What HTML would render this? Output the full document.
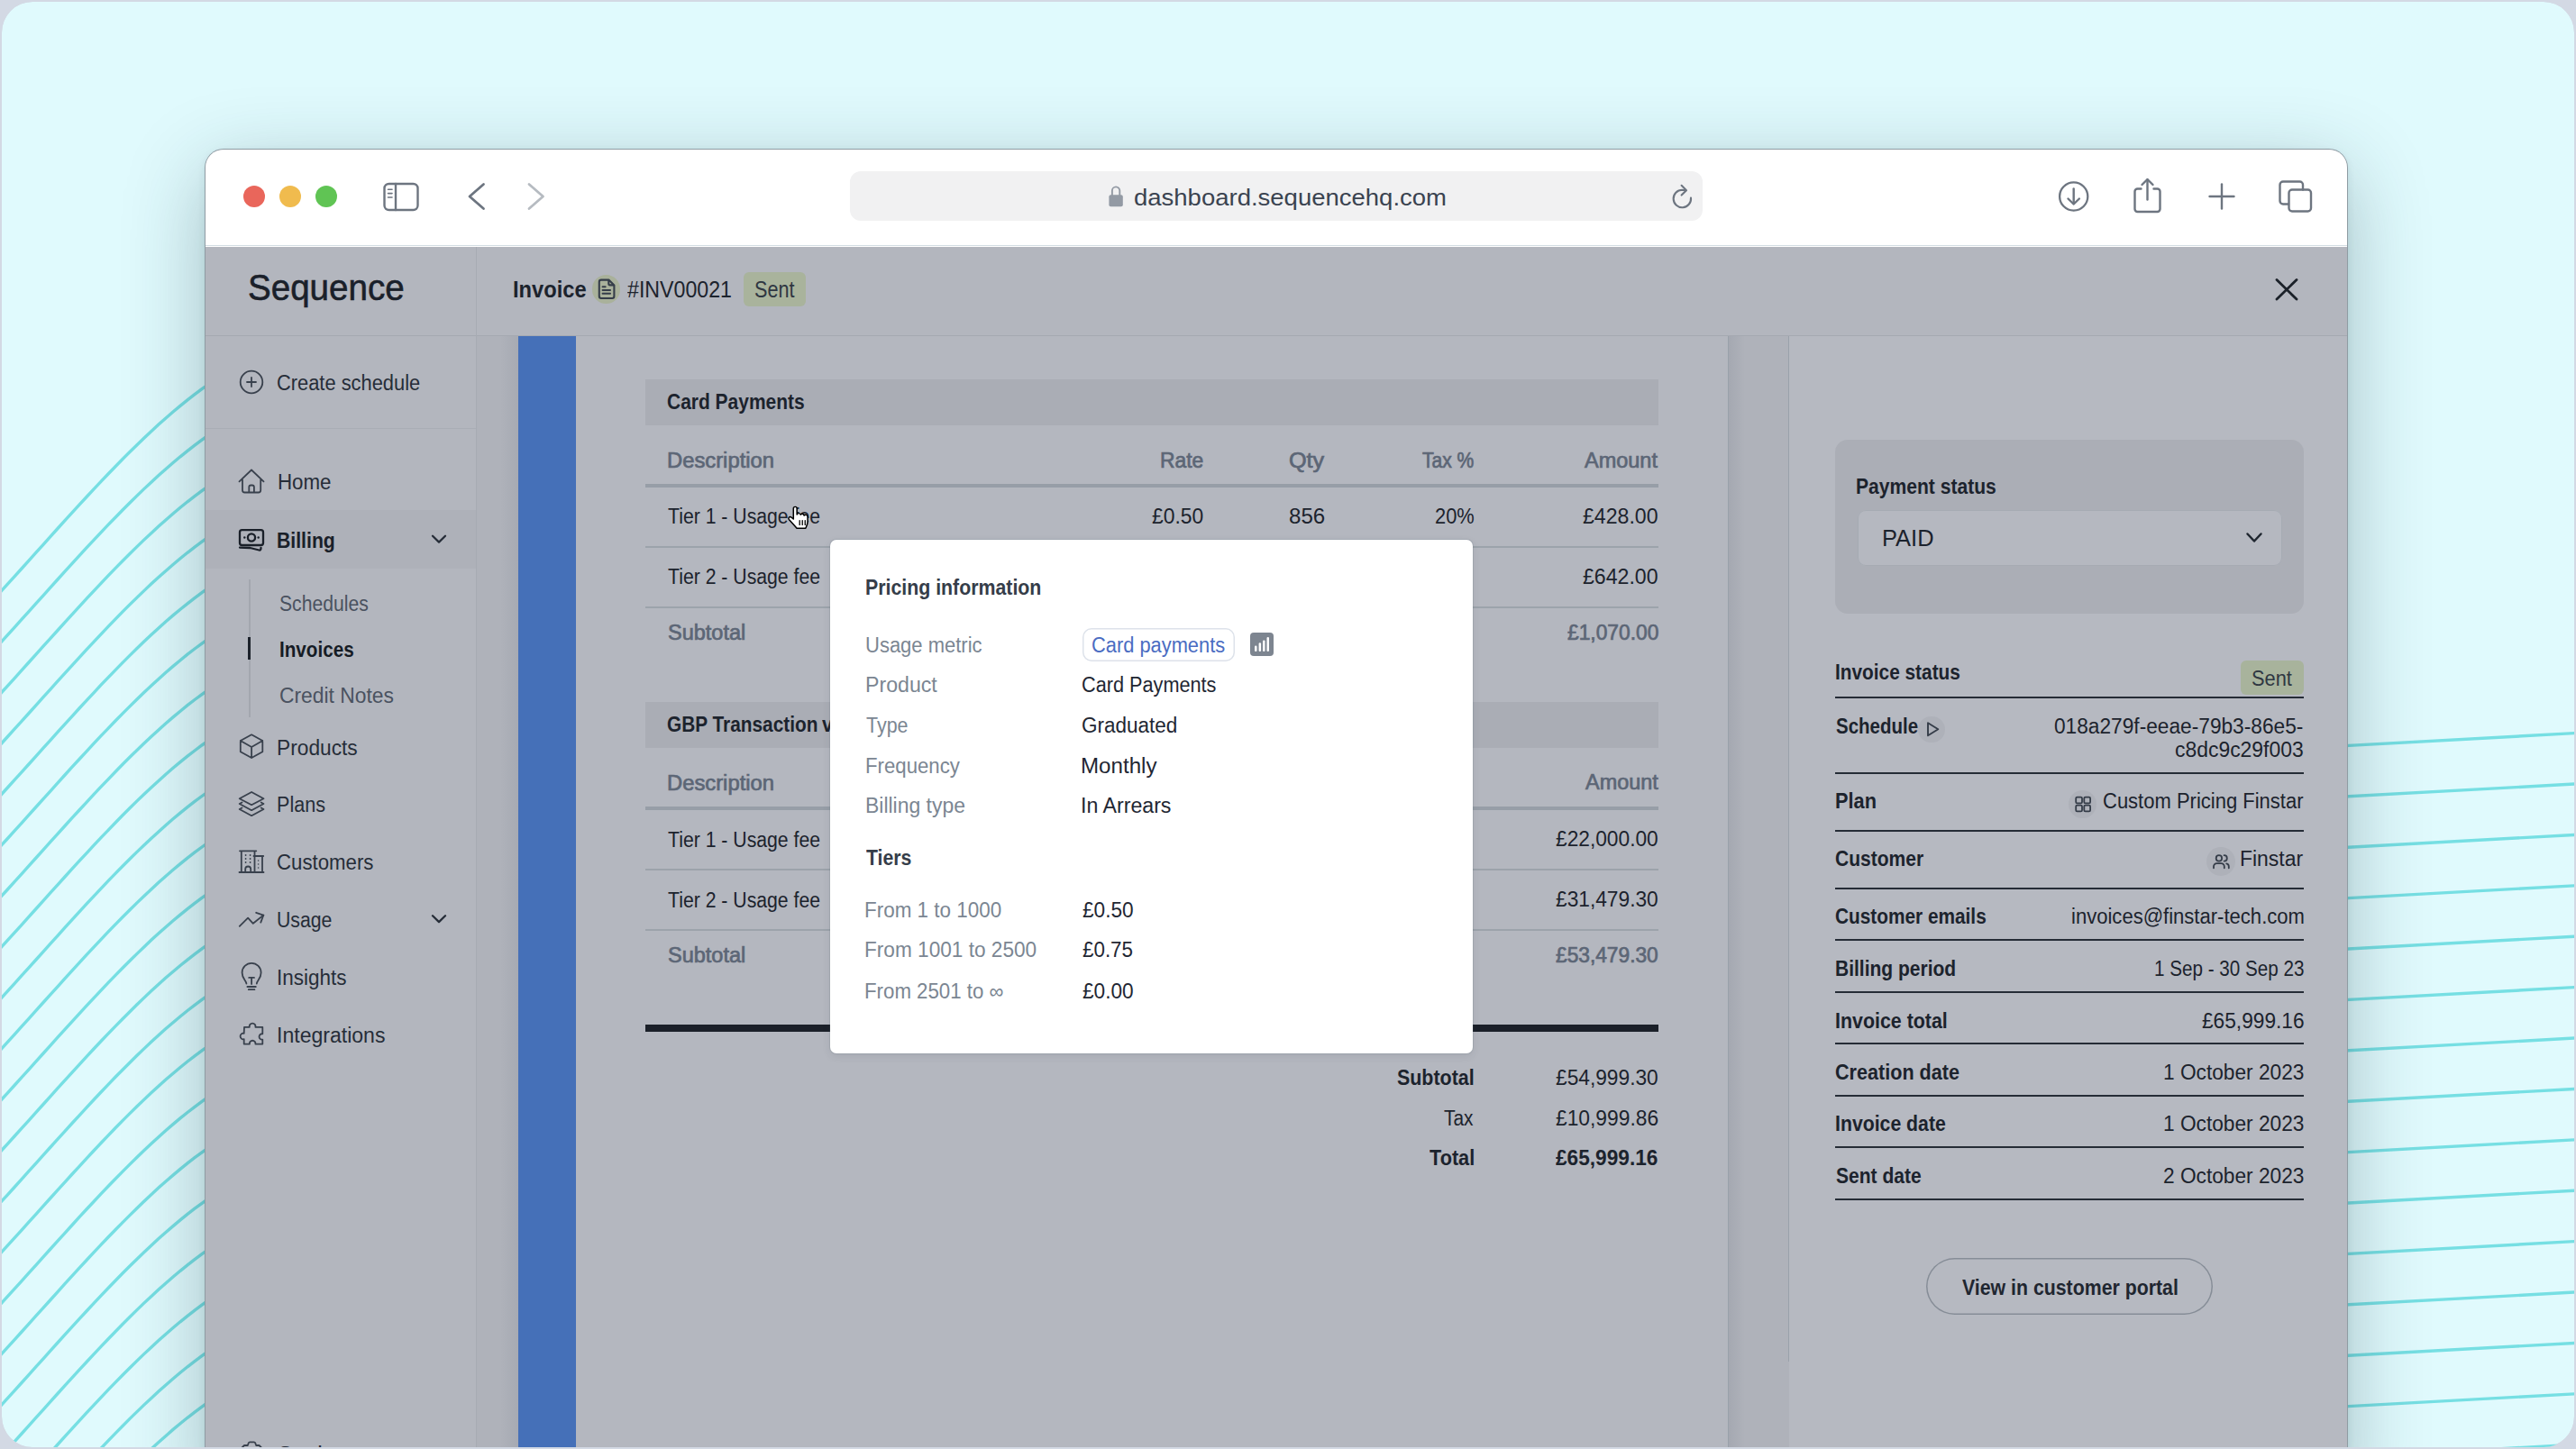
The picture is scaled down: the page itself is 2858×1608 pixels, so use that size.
<!DOCTYPE html>
<html><head><meta charset="utf-8"><style>
html,body{margin:0;padding:0}
body{width:2858px;height:1608px;position:relative;overflow:hidden;background:#d3d9e4;font-family:"Liberation Sans",sans-serif}
body>div{position:absolute}
.t{white-space:nowrap;line-height:1;transform-origin:0 0}
</style></head><body>
<svg width="2858" height="1608" style="position:absolute;left:0;top:0;z-index:0"><defs><clipPath id="fc"><rect x="2" y="2" width="2854" height="1604" rx="34"/></clipPath></defs><g clip-path="url(#fc)"><rect x="2" y="2" width="2854" height="1604" rx="34" fill="#e0fafd"/><g fill="none" stroke="#76dfe3" stroke-width="3.4"><path d="M-40.0,700.0 L-32.0,691.6 L-24.0,683.2 L-16.0,674.7 L-8.0,666.1 L0.0,657.4 L8.0,648.6 L16.0,639.8 L24.0,631.0 L32.0,622.1 L40.0,613.2 L48.0,604.3 L56.0,595.4 L64.0,586.5 L72.0,577.7 L80.0,568.9 L88.0,560.1 L96.0,551.5 L104.0,542.9 L112.0,534.4 L120.0,526.0 L128.0,517.7 L136.0,509.5 L144.0,501.5 L152.0,493.7 L160.0,486.0 L168.0,478.4 L176.0,471.1 L184.0,464.0 L192.0,457.0 L200.0,450.4 L208.0,443.9 L216.0,437.7 L224.0,431.7 L232.0,426.1 L240.0,420.7 L248.0,415.6 L256.0,410.8 L264.0,406.4 L272.0,402.2 L280.0,398.5 L288.0,395.0 L296.0,392.0"/><path d="M-40.0,756.4 L-32.0,748.1 L-24.0,739.7 L-16.0,731.2 L-8.0,722.6 L0.0,713.9 L8.0,705.1 L16.0,696.3 L24.0,687.4 L32.0,678.6 L40.0,669.7 L48.0,660.8 L56.0,651.9 L64.0,643.0 L72.0,634.2 L80.0,625.4 L88.0,616.6 L96.0,607.9 L104.0,599.3 L112.0,590.8 L120.0,582.4 L128.0,574.2 L136.0,566.0 L144.0,558.0 L152.0,550.1 L160.0,542.4 L168.0,534.9 L176.0,527.6 L184.0,520.4 L192.0,513.5 L200.0,506.8 L208.0,500.4 L216.0,494.2 L224.0,488.2 L232.0,482.5 L240.0,477.2 L248.0,472.1 L256.0,467.3 L264.0,462.8 L272.0,458.7 L280.0,454.9 L288.0,451.5 L296.0,448.5"/><path d="M-40.0,812.9 L-32.0,804.6 L-24.0,796.2 L-16.0,787.6 L-8.0,779.0 L0.0,770.3 L8.0,761.6 L16.0,752.8 L24.0,743.9 L32.0,735.0 L40.0,726.1 L48.0,717.2 L56.0,708.3 L64.0,699.5 L72.0,690.6 L80.0,681.8 L88.0,673.1 L96.0,664.4 L104.0,655.8 L112.0,647.3 L120.0,638.9 L128.0,630.6 L136.0,622.5 L144.0,614.5 L152.0,606.6 L160.0,598.9 L168.0,591.4 L176.0,584.0 L184.0,576.9 L192.0,570.0 L200.0,563.3 L208.0,556.8 L216.0,550.6 L224.0,544.7 L232.0,539.0 L240.0,533.6 L248.0,528.5 L256.0,523.8 L264.0,519.3 L272.0,515.2 L280.0,511.4 L288.0,508.0 L296.0,504.9"/><path d="M-40.0,869.4 L-32.0,861.1 L-24.0,852.6 L-16.0,844.1 L-8.0,835.5 L0.0,826.8 L8.0,818.0 L16.0,809.2 L24.0,800.4 L32.0,791.5 L40.0,782.6 L48.0,773.7 L56.0,764.8 L64.0,755.9 L72.0,747.1 L80.0,738.3 L88.0,729.6 L96.0,720.9 L104.0,712.3 L112.0,703.8 L120.0,695.4 L128.0,687.1 L136.0,678.9 L144.0,670.9 L152.0,663.1 L160.0,655.4 L168.0,647.8 L176.0,640.5 L184.0,633.4 L192.0,626.5 L200.0,619.8 L208.0,613.3 L216.0,607.1 L224.0,601.2 L232.0,595.5 L240.0,590.1 L248.0,585.0 L256.0,580.2 L264.0,575.8 L272.0,571.6 L280.0,567.9 L288.0,564.4 L296.0,561.4"/><path d="M-40.0,925.8 L-32.0,917.5 L-24.0,909.1 L-16.0,900.6 L-8.0,892.0 L0.0,883.3 L8.0,874.5 L16.0,865.7 L24.0,856.9 L32.0,848.0 L40.0,839.1 L48.0,830.2 L56.0,821.3 L64.0,812.4 L72.0,803.6 L80.0,794.8 L88.0,786.0 L96.0,777.3 L104.0,768.8 L112.0,760.2 L120.0,751.8 L128.0,743.6 L136.0,735.4 L144.0,727.4 L152.0,719.5 L160.0,711.8 L168.0,704.3 L176.0,697.0 L184.0,689.8 L192.0,682.9 L200.0,676.2 L208.0,669.8 L216.0,663.6 L224.0,657.6 L232.0,651.9 L240.0,646.6 L248.0,641.5 L256.0,636.7 L264.0,632.2 L272.0,628.1 L280.0,624.3 L288.0,620.9 L296.0,617.9"/><path d="M-40.0,982.3 L-32.0,974.0 L-24.0,965.6 L-16.0,957.0 L-8.0,948.4 L0.0,939.7 L8.0,931.0 L16.0,922.2 L24.0,913.3 L32.0,904.4 L40.0,895.5 L48.0,886.6 L56.0,877.8 L64.0,868.9 L72.0,860.0 L80.0,851.2 L88.0,842.5 L96.0,833.8 L104.0,825.2 L112.0,816.7 L120.0,808.3 L128.0,800.0 L136.0,791.9 L144.0,783.9 L152.0,776.0 L160.0,768.3 L168.0,760.8 L176.0,753.4 L184.0,746.3 L192.0,739.4 L200.0,732.7 L208.0,726.2 L216.0,720.0 L224.0,714.1 L232.0,708.4 L240.0,703.0 L248.0,697.9 L256.0,693.2 L264.0,688.7 L272.0,684.6 L280.0,680.8 L288.0,677.4 L296.0,674.3"/><path d="M-40.0,1038.8 L-32.0,1030.5 L-24.0,1022.0 L-16.0,1013.5 L-8.0,1004.9 L0.0,996.2 L8.0,987.5 L16.0,978.6 L24.0,969.8 L32.0,960.9 L40.0,952.0 L48.0,943.1 L56.0,934.2 L64.0,925.3 L72.0,916.5 L80.0,907.7 L88.0,899.0 L96.0,890.3 L104.0,881.7 L112.0,873.2 L120.0,864.8 L128.0,856.5 L136.0,848.3 L144.0,840.3 L152.0,832.5 L160.0,824.8 L168.0,817.3 L176.0,809.9 L184.0,802.8 L192.0,795.9 L200.0,789.2 L208.0,782.7 L216.0,776.5 L224.0,770.6 L232.0,764.9 L240.0,759.5 L248.0,754.4 L256.0,749.6 L264.0,745.2 L272.0,741.0 L280.0,737.3 L288.0,733.9 L296.0,730.8"/><path d="M-40.0,1095.2 L-32.0,1086.9 L-24.0,1078.5 L-16.0,1070.0 L-8.0,1061.4 L0.0,1052.7 L8.0,1043.9 L16.0,1035.1 L24.0,1026.3 L32.0,1017.4 L40.0,1008.5 L48.0,999.6 L56.0,990.7 L64.0,981.8 L72.0,973.0 L80.0,964.2 L88.0,955.4 L96.0,946.8 L104.0,938.2 L112.0,929.7 L120.0,921.3 L128.0,913.0 L136.0,904.8 L144.0,896.8 L152.0,888.9 L160.0,881.2 L168.0,873.7 L176.0,866.4 L184.0,859.3 L192.0,852.3 L200.0,845.6 L208.0,839.2 L216.0,833.0 L224.0,827.0 L232.0,821.4 L240.0,816.0 L248.0,810.9 L256.0,806.1 L264.0,801.6 L272.0,797.5 L280.0,793.7 L288.0,790.3 L296.0,787.3"/><path d="M-40.0,1151.7 L-32.0,1143.4 L-24.0,1135.0 L-16.0,1126.5 L-8.0,1117.8 L0.0,1109.2 L8.0,1100.4 L16.0,1091.6 L24.0,1082.7 L32.0,1073.9 L40.0,1065.0 L48.0,1056.1 L56.0,1047.2 L64.0,1038.3 L72.0,1029.4 L80.0,1020.6 L88.0,1011.9 L96.0,1003.2 L104.0,994.6 L112.0,986.1 L120.0,977.7 L128.0,969.4 L136.0,961.3 L144.0,953.3 L152.0,945.4 L160.0,937.7 L168.0,930.2 L176.0,922.9 L184.0,915.7 L192.0,908.8 L200.0,902.1 L208.0,895.7 L216.0,889.4 L224.0,883.5 L232.0,877.8 L240.0,872.4 L248.0,867.4 L256.0,862.6 L264.0,858.1 L272.0,854.0 L280.0,850.2 L288.0,846.8 L296.0,843.7"/><path d="M-40.0,1208.2 L-32.0,1199.9 L-24.0,1191.5 L-16.0,1182.9 L-8.0,1174.3 L0.0,1165.6 L8.0,1156.9 L16.0,1148.1 L24.0,1139.2 L32.0,1130.3 L40.0,1121.4 L48.0,1112.5 L56.0,1103.6 L64.0,1094.8 L72.0,1085.9 L80.0,1077.1 L88.0,1068.4 L96.0,1059.7 L104.0,1051.1 L112.0,1042.6 L120.0,1034.2 L128.0,1025.9 L136.0,1017.8 L144.0,1009.7 L152.0,1001.9 L160.0,994.2 L168.0,986.7 L176.0,979.3 L184.0,972.2 L192.0,965.3 L200.0,958.6 L208.0,952.1 L216.0,945.9 L224.0,940.0 L232.0,934.3 L240.0,928.9 L248.0,923.8 L256.0,919.0 L264.0,914.6 L272.0,910.5 L280.0,906.7 L288.0,903.3 L296.0,900.2"/><path d="M-40.0,1264.7 L-32.0,1256.3 L-24.0,1247.9 L-16.0,1239.4 L-8.0,1230.8 L0.0,1222.1 L8.0,1213.3 L16.0,1204.5 L24.0,1195.7 L32.0,1186.8 L40.0,1177.9 L48.0,1169.0 L56.0,1160.1 L64.0,1151.2 L72.0,1142.4 L80.0,1133.6 L88.0,1124.8 L96.0,1116.2 L104.0,1107.6 L112.0,1099.1 L120.0,1090.7 L128.0,1082.4 L136.0,1074.2 L144.0,1066.2 L152.0,1058.4 L160.0,1050.7 L168.0,1043.1 L176.0,1035.8 L184.0,1028.7 L192.0,1021.7 L200.0,1015.1 L208.0,1008.6 L216.0,1002.4 L224.0,996.4 L232.0,990.8 L240.0,985.4 L248.0,980.3 L256.0,975.5 L264.0,971.1 L272.0,966.9 L280.0,963.2 L288.0,959.7 L296.0,956.7"/><path d="M-40.0,1321.1 L-32.0,1312.8 L-24.0,1304.4 L-16.0,1295.9 L-8.0,1287.3 L0.0,1278.6 L8.0,1269.8 L16.0,1261.0 L24.0,1252.1 L32.0,1243.3 L40.0,1234.4 L48.0,1225.5 L56.0,1216.6 L64.0,1207.7 L72.0,1198.9 L80.0,1190.1 L88.0,1181.3 L96.0,1172.6 L104.0,1164.0 L112.0,1155.5 L120.0,1147.1 L128.0,1138.9 L136.0,1130.7 L144.0,1122.7 L152.0,1114.8 L160.0,1107.1 L168.0,1099.6 L176.0,1092.3 L184.0,1085.1 L192.0,1078.2 L200.0,1071.5 L208.0,1065.1 L216.0,1058.9 L224.0,1052.9 L232.0,1047.2 L240.0,1041.9 L248.0,1036.8 L256.0,1032.0 L264.0,1027.5 L272.0,1023.4 L280.0,1019.6 L288.0,1016.2 L296.0,1013.2"/><path d="M-40.0,1377.6 L-32.0,1369.3 L-24.0,1360.9 L-16.0,1352.3 L-8.0,1343.7 L0.0,1335.0 L8.0,1326.3 L16.0,1317.5 L24.0,1308.6 L32.0,1299.7 L40.0,1290.8 L48.0,1281.9 L56.0,1273.0 L64.0,1264.2 L72.0,1255.3 L80.0,1246.5 L88.0,1237.8 L96.0,1229.1 L104.0,1220.5 L112.0,1212.0 L120.0,1203.6 L128.0,1195.3 L136.0,1187.2 L144.0,1179.2 L152.0,1171.3 L160.0,1163.6 L168.0,1156.1 L176.0,1148.7 L184.0,1141.6 L192.0,1134.7 L200.0,1128.0 L208.0,1121.5 L216.0,1115.3 L224.0,1109.4 L232.0,1103.7 L240.0,1098.3 L248.0,1093.2 L256.0,1088.5 L264.0,1084.0 L272.0,1079.9 L280.0,1076.1 L288.0,1072.7 L296.0,1069.6"/><path d="M-40.0,1434.1 L-32.0,1425.8 L-24.0,1417.3 L-16.0,1408.8 L-8.0,1400.2 L0.0,1391.5 L8.0,1382.7 L16.0,1373.9 L24.0,1365.1 L32.0,1356.2 L40.0,1347.3 L48.0,1338.4 L56.0,1329.5 L64.0,1320.6 L72.0,1311.8 L80.0,1303.0 L88.0,1294.3 L96.0,1285.6 L104.0,1277.0 L112.0,1268.5 L120.0,1260.1 L128.0,1251.8 L136.0,1243.6 L144.0,1235.6 L152.0,1227.8 L160.0,1220.1 L168.0,1212.5 L176.0,1205.2 L184.0,1198.1 L192.0,1191.2 L200.0,1184.5 L208.0,1178.0 L216.0,1171.8 L224.0,1165.9 L232.0,1160.2 L240.0,1154.8 L248.0,1149.7 L256.0,1144.9 L264.0,1140.5 L272.0,1136.3 L280.0,1132.6 L288.0,1129.1 L296.0,1126.1"/><path d="M-40.0,1490.5 L-32.0,1482.2 L-24.0,1473.8 L-16.0,1465.3 L-8.0,1456.7 L0.0,1448.0 L8.0,1439.2 L16.0,1430.4 L24.0,1421.6 L32.0,1412.7 L40.0,1403.8 L48.0,1394.9 L56.0,1386.0 L64.0,1377.1 L72.0,1368.3 L80.0,1359.5 L88.0,1350.7 L96.0,1342.0 L104.0,1333.5 L112.0,1324.9 L120.0,1316.5 L128.0,1308.3 L136.0,1300.1 L144.0,1292.1 L152.0,1284.2 L160.0,1276.5 L168.0,1269.0 L176.0,1261.7 L184.0,1254.5 L192.0,1247.6 L200.0,1240.9 L208.0,1234.5 L216.0,1228.3 L224.0,1222.3 L232.0,1216.6 L240.0,1211.3 L248.0,1206.2 L256.0,1201.4 L264.0,1196.9 L272.0,1192.8 L280.0,1189.0 L288.0,1185.6 L296.0,1182.6"/><path d="M-40.0,1547.0 L-32.0,1538.7 L-24.0,1530.3 L-16.0,1521.7 L-8.0,1513.1 L0.0,1504.4 L8.0,1495.7 L16.0,1486.9 L24.0,1478.0 L32.0,1469.1 L40.0,1460.2 L48.0,1451.3 L56.0,1442.5 L64.0,1433.6 L72.0,1424.7 L80.0,1415.9 L88.0,1407.2 L96.0,1398.5 L104.0,1389.9 L112.0,1381.4 L120.0,1373.0 L128.0,1364.7 L136.0,1356.6 L144.0,1348.6 L152.0,1340.7 L160.0,1333.0 L168.0,1325.5 L176.0,1318.1 L184.0,1311.0 L192.0,1304.1 L200.0,1297.4 L208.0,1290.9 L216.0,1284.7 L224.0,1278.8 L232.0,1273.1 L240.0,1267.7 L248.0,1262.6 L256.0,1257.9 L264.0,1253.4 L272.0,1249.3 L280.0,1245.5 L288.0,1242.1 L296.0,1239.0"/><path d="M-40.0,1603.5 L-32.0,1595.2 L-24.0,1586.7 L-16.0,1578.2 L-8.0,1569.6 L0.0,1560.9 L8.0,1552.2 L16.0,1543.3 L24.0,1534.5 L32.0,1525.6 L40.0,1516.7 L48.0,1507.8 L56.0,1498.9 L64.0,1490.0 L72.0,1481.2 L80.0,1472.4 L88.0,1463.7 L96.0,1455.0 L104.0,1446.4 L112.0,1437.9 L120.0,1429.5 L128.0,1421.2 L136.0,1413.0 L144.0,1405.0 L152.0,1397.2 L160.0,1389.5 L168.0,1382.0 L176.0,1374.6 L184.0,1367.5 L192.0,1360.6 L200.0,1353.9 L208.0,1347.4 L216.0,1341.2 L224.0,1335.3 L232.0,1329.6 L240.0,1324.2 L248.0,1319.1 L256.0,1314.3 L264.0,1309.9 L272.0,1305.7 L280.0,1302.0 L288.0,1298.6 L296.0,1295.5"/><path d="M-40.0,1659.9 L-32.0,1651.6 L-24.0,1643.2 L-16.0,1634.7 L-8.0,1626.1 L0.0,1617.4 L8.0,1608.6 L16.0,1599.8 L24.0,1591.0 L32.0,1582.1 L40.0,1573.2 L48.0,1564.3 L56.0,1555.4 L64.0,1546.5 L72.0,1537.7 L80.0,1528.9 L88.0,1520.1 L96.0,1511.5 L104.0,1502.9 L112.0,1494.4 L120.0,1486.0 L128.0,1477.7 L136.0,1469.5 L144.0,1461.5 L152.0,1453.6 L160.0,1445.9 L168.0,1438.4 L176.0,1431.1 L184.0,1424.0 L192.0,1417.0 L200.0,1410.3 L208.0,1403.9 L216.0,1397.7 L224.0,1391.7 L232.0,1386.1 L240.0,1380.7 L248.0,1375.6 L256.0,1370.8 L264.0,1366.3 L272.0,1362.2 L280.0,1358.4 L288.0,1355.0 L296.0,1352.0"/><path d="M-40.0,1716.4 L-32.0,1708.1 L-24.0,1699.7 L-16.0,1691.2 L-8.0,1682.5 L0.0,1673.9 L8.0,1665.1 L16.0,1656.3 L24.0,1647.4 L32.0,1638.6 L40.0,1629.7 L48.0,1620.8 L56.0,1611.9 L64.0,1603.0 L72.0,1594.1 L80.0,1585.3 L88.0,1576.6 L96.0,1567.9 L104.0,1559.3 L112.0,1550.8 L120.0,1542.4 L128.0,1534.1 L136.0,1526.0 L144.0,1518.0 L152.0,1510.1 L160.0,1502.4 L168.0,1494.9 L176.0,1487.6 L184.0,1480.4 L192.0,1473.5 L200.0,1466.8 L208.0,1460.4 L216.0,1454.1 L224.0,1448.2 L232.0,1442.5 L240.0,1437.1 L248.0,1432.1 L256.0,1427.3 L264.0,1422.8 L272.0,1418.7 L280.0,1414.9 L288.0,1411.5 L296.0,1408.4"/><path d="M-40.0,1772.9 L-32.0,1764.6 L-24.0,1756.2 L-16.0,1747.6 L-8.0,1739.0 L0.0,1730.3 L8.0,1721.6 L16.0,1712.8 L24.0,1703.9 L32.0,1695.0 L40.0,1686.1 L48.0,1677.2 L56.0,1668.3 L64.0,1659.5 L72.0,1650.6 L80.0,1641.8 L88.0,1633.1 L96.0,1624.4 L104.0,1615.8 L112.0,1607.3 L120.0,1598.9 L128.0,1590.6 L136.0,1582.5 L144.0,1574.4 L152.0,1566.6 L160.0,1558.9 L168.0,1551.4 L176.0,1544.0 L184.0,1536.9 L192.0,1530.0 L200.0,1523.3 L208.0,1516.8 L216.0,1510.6 L224.0,1504.7 L232.0,1499.0 L240.0,1493.6 L248.0,1488.5 L256.0,1483.7 L264.0,1479.3 L272.0,1475.2 L280.0,1471.4 L288.0,1468.0 L296.0,1464.9"/><path d="M-40.0,1829.4 L-32.0,1821.0 L-24.0,1812.6 L-16.0,1804.1 L-8.0,1795.5 L0.0,1786.8 L8.0,1778.0 L16.0,1769.2 L24.0,1760.4 L32.0,1751.5 L40.0,1742.6 L48.0,1733.7 L56.0,1724.8 L64.0,1715.9 L72.0,1707.1 L80.0,1698.3 L88.0,1689.5 L96.0,1680.9 L104.0,1672.3 L112.0,1663.8 L120.0,1655.4 L128.0,1647.1 L136.0,1638.9 L144.0,1630.9 L152.0,1623.1 L160.0,1615.4 L168.0,1607.8 L176.0,1600.5 L184.0,1593.4 L192.0,1586.4 L200.0,1579.8 L208.0,1573.3 L216.0,1567.1 L224.0,1561.1 L232.0,1555.5 L240.0,1550.1 L248.0,1545.0 L256.0,1540.2 L264.0,1535.8 L272.0,1531.6 L280.0,1527.9 L288.0,1524.4 L296.0,1521.4"/><path d="M-40.0,1885.8 L-32.0,1877.5 L-24.0,1869.1 L-16.0,1860.6 L-8.0,1852.0 L0.0,1843.3 L8.0,1834.5 L16.0,1825.7 L24.0,1816.8 L32.0,1808.0 L40.0,1799.1 L48.0,1790.2 L56.0,1781.3 L64.0,1772.4 L72.0,1763.6 L80.0,1754.8 L88.0,1746.0 L96.0,1737.3 L104.0,1728.7 L112.0,1720.2 L120.0,1711.8 L128.0,1703.6 L136.0,1695.4 L144.0,1687.4 L152.0,1679.5 L160.0,1671.8 L168.0,1664.3 L176.0,1657.0 L184.0,1649.8 L192.0,1642.9 L200.0,1636.2 L208.0,1629.8 L216.0,1623.6 L224.0,1617.6 L232.0,1611.9 L240.0,1606.6 L248.0,1601.5 L256.0,1596.7 L264.0,1592.2 L272.0,1588.1 L280.0,1584.3 L288.0,1580.9 L296.0,1577.9"/><path d="M-40.0,1942.3 L-32.0,1934.0 L-24.0,1925.6 L-16.0,1917.0 L-8.0,1908.4 L0.0,1899.7 L8.0,1891.0 L16.0,1882.2 L24.0,1873.3 L32.0,1864.4 L40.0,1855.5 L48.0,1846.6 L56.0,1837.7 L64.0,1828.9 L72.0,1820.0 L80.0,1811.2 L88.0,1802.5 L96.0,1793.8 L104.0,1785.2 L112.0,1776.7 L120.0,1768.3 L128.0,1760.0 L136.0,1751.9 L144.0,1743.9 L152.0,1736.0 L160.0,1728.3 L168.0,1720.8 L176.0,1713.4 L184.0,1706.3 L192.0,1699.4 L200.0,1692.7 L208.0,1686.2 L216.0,1680.0 L224.0,1674.1 L232.0,1668.4 L240.0,1663.0 L248.0,1657.9 L256.0,1653.2 L264.0,1648.7 L272.0,1644.6 L280.0,1640.8 L288.0,1637.4 L296.0,1634.3"/><path d="M-40.0,1998.8 L-32.0,1990.5 L-24.0,1982.0 L-16.0,1973.5 L-8.0,1964.9 L0.0,1956.2 L8.0,1947.4 L16.0,1938.6 L24.0,1929.8 L32.0,1920.9 L40.0,1912.0 L48.0,1903.1 L56.0,1894.2 L64.0,1885.3 L72.0,1876.5 L80.0,1867.7 L88.0,1859.0 L96.0,1850.3 L104.0,1841.7 L112.0,1833.2 L120.0,1824.8 L128.0,1816.5 L136.0,1808.3 L144.0,1800.3 L152.0,1792.5 L160.0,1784.8 L168.0,1777.2 L176.0,1769.9 L184.0,1762.8 L192.0,1755.9 L200.0,1749.2 L208.0,1742.7 L216.0,1736.5 L224.0,1730.6 L232.0,1724.9 L240.0,1719.5 L248.0,1714.4 L256.0,1709.6 L264.0,1705.2 L272.0,1701.0 L280.0,1697.3 L288.0,1693.8 L296.0,1690.8"/><path d="M2560,829.9 L2870,812.9"/><path d="M2560,886.3 L2870,869.3"/><path d="M2560,942.7 L2870,925.7"/><path d="M2560,999.1 L2870,982.1"/><path d="M2560,1055.5 L2870,1038.5"/><path d="M2560,1111.9 L2870,1094.9"/><path d="M2560,1168.3 L2870,1151.3"/><path d="M2560,1224.7 L2870,1207.7"/><path d="M2560,1281.1 L2870,1264.1"/><path d="M2560,1337.5 L2870,1320.5"/><path d="M2560,1393.9 L2870,1376.9"/><path d="M2560,1450.3 L2870,1433.3"/><path d="M2560,1506.7 L2870,1489.7"/><path d="M2560,1563.1 L2870,1546.1"/><path d="M2560,1619.5 L2870,1602.5"/><path d="M2560,1675.9 L2870,1658.9"/></g></g></svg>
<div style="left:228px;top:166px;width:2376px;height:1494px;background:#b3b6be;z-index:1;border-radius:20px 20px 0 0;box-shadow:0 0 0 1px #8f9ca3,0 24px 90px rgba(20,50,60,0.30),0 3px 10px rgba(20,50,60,0.10)"></div><div style="left:0px;top:1606px;width:2858px;height:2px;background:#d3d9e4;z-index:30;"></div><div style="left:228px;top:166px;width:2376px;height:108px;background:#ffffff;z-index:2;border-radius:20px 20px 0 0"></div><div style="left:228px;top:272px;width:2376px;height:1px;background:#d3dde3;z-index:3;"></div><div style="left:943px;top:190px;width:946px;height:55px;background:#f1f1f2;z-index:3;border-radius:12px"></div><div style="left:270px;top:206px;width:24px;height:24px;background:#e9665b;z-index:3;border-radius:50%"></div><div style="left:310px;top:206px;width:24px;height:24px;background:#f0bb4e;z-index:3;border-radius:50%"></div><div style="left:350px;top:206px;width:24px;height:24px;background:#60c454;z-index:3;border-radius:50%"></div><div style="left:228px;top:274px;width:2376px;height:99px;background:#b3b6be;z-index:2;"></div><div style="left:228px;top:372px;width:2376px;height:1px;background:#a5a9b1;z-index:3;"></div><div style="left:528px;top:274px;width:1px;height:1332px;background:#a7abb3;z-index:3;"></div><div style="left:228px;top:475px;width:300px;height:1px;background:#a9adb5;z-index:3;"></div><div style="left:228px;top:566px;width:300px;height:65px;background:#aeb1b9;z-index:3;"></div><div style="left:275.5px;top:643px;width:2.0px;height:153px;background:#a3a7af;z-index:3;"></div><div style="left:275px;top:707px;width:3px;height:25px;background:#1c222b;z-index:4;"></div><div style="left:529px;top:373px;width:1456px;height:1233px;background:#afb2ba;z-index:2;"></div><div style="left:575px;top:373px;width:1342px;height:1233px;background:#b4b7bf;z-index:3;"></div><div style="left:555px;top:373px;width:20px;height:1233px;background:linear-gradient(90deg,rgba(90,100,115,0) 0%,rgba(90,100,115,0.10) 100%);z-index:3;"></div><div style="left:1918px;top:373px;width:18px;height:1233px;background:linear-gradient(90deg,rgba(90,100,115,0.12) 0%,rgba(90,100,115,0) 100%);z-index:3;"></div><div style="left:1917px;top:373px;width:1px;height:1233px;background:#9aa1aa;z-index:4;"></div><div style="left:1984px;top:373px;width:1px;height:1137.5px;background:#9aa1aa;z-index:4;"></div><div style="left:1985px;top:373px;width:619px;height:1233px;background:#b6b9c1;z-index:2;"></div><div style="left:575px;top:373px;width:64px;height:1233px;background:#4570b8;z-index:4;"></div><div style="left:716px;top:421px;width:1124px;height:51px;background:#aaadb5;z-index:4;"></div><div style="left:716px;top:536.5px;width:1124px;height:4.5px;background:#979ea7;z-index:4;"></div><div style="left:716px;top:605.5px;width:1124px;height:2.5px;background:#9ca3ab;z-index:4;"></div><div style="left:716px;top:672.5px;width:1124px;height:2.5px;background:#9ca3ab;z-index:4;"></div><div style="left:716px;top:779px;width:1124px;height:51px;background:#aaadb5;z-index:4;"></div><div style="left:716px;top:894.5px;width:1124px;height:4.5px;background:#979ea7;z-index:4;"></div><div style="left:716px;top:963.5px;width:1124px;height:2.5px;background:#9ca3ab;z-index:4;"></div><div style="left:716px;top:1030.5px;width:1124px;height:2.5px;background:#9ca3ab;z-index:4;"></div><div style="left:716px;top:1137px;width:1124px;height:8px;background:#1b2029;z-index:4;"></div><div style="left:2036px;top:488px;width:520px;height:193px;background:#abaeb6;z-index:4;border-radius:14px"></div><div style="left:2061px;top:566px;width:471px;height:62px;background:#b5b8c0;z-index:5;border-radius:9px;box-shadow:inset 0 0 0 1px #a6abb3"></div><div style="left:2036px;top:773px;width:520px;height:2px;background:#252c36;z-index:4;"></div><div style="left:2036px;top:856.5px;width:520px;height:2.0px;background:#252c36;z-index:4;"></div><div style="left:2036px;top:920.5px;width:520px;height:2.0px;background:#252c36;z-index:4;"></div><div style="left:2036px;top:984.5px;width:520px;height:2.0px;background:#252c36;z-index:4;"></div><div style="left:2036px;top:1042px;width:520px;height:2px;background:#252c36;z-index:4;"></div><div style="left:2036px;top:1099.7px;width:520px;height:2.0px;background:#252c36;z-index:4;"></div><div style="left:2036px;top:1157px;width:520px;height:2px;background:#252c36;z-index:4;"></div><div style="left:2036px;top:1214.9px;width:520px;height:2.0px;background:#252c36;z-index:4;"></div><div style="left:2036px;top:1272px;width:520px;height:2px;background:#252c36;z-index:4;"></div><div style="left:2036px;top:1329.6px;width:520px;height:2.0px;background:#252c36;z-index:4;"></div><div style="left:2137px;top:1396px;width:318px;height:63px;background:transparent;z-index:4;border-radius:32px;box-shadow:inset 0 0 0 1.5px #868d97"></div><div style="left:825.3px;top:302px;width:69.20000000000005px;height:38px;background:#a9b39c;z-index:4;border-radius:6px"></div><div style="left:2486px;top:733px;width:70px;height:37.5px;background:#a8b39c;z-index:4;border-radius:6px"></div><div style="left:657.1px;top:305.4px;width:31.200000000000045px;height:31.200000000000045px;background:#a9b19b;z-index:4;border-radius:50%"></div><div style="left:2128.4px;top:794.6999999999999px;width:29.199999999999818px;height:29.200000000000045px;background:#aeb1b9;z-index:4;border-radius:50%"></div><div style="left:2295.2px;top:876.9px;width:31.0px;height:31.0px;background:#aeb1b9;z-index:4;border-radius:50%"></div><div style="left:2448.2999999999997px;top:940.0px;width:31.800000000000182px;height:31.799999999999955px;background:#aeb1b9;z-index:4;border-radius:50%"></div><div style="left:920.5px;top:598.5px;width:713.5px;height:570.5px;background:#ffffff;z-index:10;border-radius:7px;box-shadow:0 0 0 1px rgba(90,100,115,0.15),0 3px 10px rgba(40,50,60,0.10)"></div><div style="left:1201px;top:697px;width:169px;height:37px;background:#ffffff;z-index:11;border-radius:10px;box-shadow:inset 0 0 0 1.5px #dde2ea"></div><div style="left:1387.3px;top:702px;width:25.40000000000009px;height:26px;background:#7d8590;z-index:11;border-radius:4px"></div><div class="t" style="left:1257.86px;top:206.00px;font-size:26.5px;font-weight:400;color:#3a4350;z-index:6;transform:scaleX(1.0375);">dashboard.sequencehq.com</div><div class="t" style="left:275.07px;top:299.00px;font-size:40px;font-weight:400;color:#1a202a;z-index:6;transform:scaleX(0.9641);-webkit-text-stroke:0.6px currentColor;">Sequence</div><div class="t" style="left:568.78px;top:308.00px;font-size:26px;font-weight:700;color:#1c232d;z-index:6;transform:scaleX(0.9103);">Invoice</div><div class="t" style="left:696.00px;top:308.00px;font-size:26px;font-weight:400;color:#1c232d;z-index:6;transform:scaleX(0.8915);">#INV00021</div><div class="t" style="left:836.89px;top:308.00px;font-size:26px;font-weight:400;color:#2f3742;z-index:6;transform:scaleX(0.8308);">Sent</div><div class="t" style="left:307.43px;top:414.00px;font-size:23px;font-weight:400;color:#262d38;z-index:6;transform:scaleX(0.9503);">Create schedule</div><div class="t" style="left:307.56px;top:524.00px;font-size:23px;font-weight:400;color:#262d38;z-index:6;transform:scaleX(0.9703);">Home</div><div class="t" style="left:307.16px;top:589.00px;font-size:23px;font-weight:700;color:#1a2029;z-index:6;transform:scaleX(0.9224);">Billing</div><div class="t" style="left:310.18px;top:659.00px;font-size:23px;font-weight:400;color:#4a5260;z-index:6;transform:scaleX(0.9189);">Schedules</div><div class="t" style="left:310.20px;top:710.00px;font-size:23px;font-weight:700;color:#161c25;z-index:6;transform:scaleX(0.8978);">Invoices</div><div class="t" style="left:309.68px;top:761.00px;font-size:23px;font-weight:400;color:#4a5260;z-index:6;transform:scaleX(0.9931);">Credit Notes</div><div class="t" style="left:306.72px;top:819.00px;font-size:23px;font-weight:400;color:#262d38;z-index:6;transform:scaleX(0.9886);">Products</div><div class="t" style="left:306.82px;top:882.00px;font-size:23px;font-weight:400;color:#262d38;z-index:6;transform:scaleX(0.9384);">Plans</div><div class="t" style="left:307.41px;top:946.00px;font-size:23px;font-weight:400;color:#262d38;z-index:6;transform:scaleX(0.9661);">Customers</div><div class="t" style="left:307.16px;top:1010.00px;font-size:23px;font-weight:400;color:#262d38;z-index:6;transform:scaleX(0.9236);">Usage</div><div class="t" style="left:306.75px;top:1074.00px;font-size:23px;font-weight:400;color:#262d38;z-index:6;transform:scaleX(0.9773);">Insights</div><div class="t" style="left:306.70px;top:1138.00px;font-size:23px;font-weight:400;color:#262d38;z-index:6;transform:scaleX(1.0023);">Integrations</div><div class="t" style="left:307.62px;top:1603.00px;font-size:23px;font-weight:400;color:#262d38;z-index:6;transform:scaleX(1.0820);">Settings</div><div class="t" style="left:740.19px;top:435.00px;font-size:23px;font-weight:700;color:#1c232d;z-index:6;transform:scaleX(0.9121);">Card Payments</div><div class="t" style="left:739.83px;top:500.00px;font-size:23px;font-weight:400;color:#5c6676;z-index:6;transform:scaleX(1.0343);-webkit-text-stroke:0.7px currentColor;">Description</div><div class="t" style="left:1287.11px;top:500.00px;font-size:23px;font-weight:400;color:#5c6676;z-index:6;transform:scaleX(0.9942);-webkit-text-stroke:0.7px currentColor;">Rate</div><div class="t" style="left:1429.90px;top:500.00px;font-size:23px;font-weight:400;color:#5c6676;z-index:6;transform:scaleX(1.0962);-webkit-text-stroke:0.7px currentColor;">Qty</div><div class="t" style="left:1578.39px;top:500.00px;font-size:23px;font-weight:400;color:#5c6676;z-index:6;transform:scaleX(0.9148);-webkit-text-stroke:0.7px currentColor;">Tax %</div><div class="t" style="left:1758.40px;top:500.00px;font-size:23px;font-weight:400;color:#5c6676;z-index:6;transform:scaleX(1.0215);-webkit-text-stroke:0.7px currentColor;">Amount</div><div class="t" style="left:740.78px;top:562.00px;font-size:23px;font-weight:400;color:#1c232d;z-index:6;transform:scaleX(0.9226);">Tier 1 - Usage fee</div><div class="t" style="left:1278.14px;top:562.00px;font-size:23px;font-weight:400;color:#1c232d;z-index:6;transform:scaleX(0.9946);">£0.50</div><div class="t" style="left:1429.95px;top:562.00px;font-size:23px;font-weight:400;color:#1c232d;z-index:6;transform:scaleX(1.0459);">856</div><div class="t" style="left:1591.75px;top:562.00px;font-size:23px;font-weight:400;color:#1c232d;z-index:6;transform:scaleX(0.9496);">20%</div><div class="t" style="left:1756.33px;top:562.00px;font-size:23px;font-weight:400;color:#1c232d;z-index:6;transform:scaleX(1.0053);">£428.00</div><div class="t" style="left:740.78px;top:629.00px;font-size:23px;font-weight:400;color:#1c232d;z-index:6;transform:scaleX(0.9226);">Tier 2 - Usage fee</div><div class="t" style="left:1756.33px;top:629.00px;font-size:23px;font-weight:400;color:#1c232d;z-index:6;transform:scaleX(1.0053);">£642.00</div><div class="t" style="left:740.88px;top:691.00px;font-size:23px;font-weight:400;color:#5c6676;z-index:6;transform:scaleX(1.0212);-webkit-text-stroke:0.7px currentColor;">Subtotal</div><div class="t" style="left:1738.74px;top:691.00px;font-size:23px;font-weight:400;color:#5c6676;z-index:6;transform:scaleX(0.9904);-webkit-text-stroke:0.7px currentColor;">£1,070.00</div><div class="t" style="left:740.49px;top:793.00px;font-size:23px;font-weight:700;color:#1c232d;z-index:6;transform:scaleX(0.9055);">GBP Transaction</div><div class="t" style="left:912.18px;top:793.00px;font-size:23px;font-weight:700;color:#1c232d;z-index:6;transform:scaleX(0.9454);">volume</div><div class="t" style="left:739.83px;top:858.00px;font-size:23px;font-weight:400;color:#5c6676;z-index:6;transform:scaleX(1.0343);-webkit-text-stroke:0.7px currentColor;">Description</div><div class="t" style="left:1758.60px;top:857.00px;font-size:23px;font-weight:400;color:#5c6676;z-index:6;transform:scaleX(1.0190);-webkit-text-stroke:0.7px currentColor;">Amount</div><div class="t" style="left:740.78px;top:921.00px;font-size:23px;font-weight:400;color:#1c232d;z-index:6;transform:scaleX(0.9226);">Tier 1 - Usage fee</div><div class="t" style="left:1726.04px;top:920.00px;font-size:23px;font-weight:400;color:#1c232d;z-index:6;transform:scaleX(0.9880);">£22,000.00</div><div class="t" style="left:740.78px;top:988.00px;font-size:23px;font-weight:400;color:#1c232d;z-index:6;transform:scaleX(0.9226);">Tier 2 - Usage fee</div><div class="t" style="left:1726.04px;top:987.00px;font-size:23px;font-weight:400;color:#1c232d;z-index:6;transform:scaleX(0.9880);">£31,479.30</div><div class="t" style="left:740.88px;top:1049.00px;font-size:23px;font-weight:400;color:#5c6676;z-index:6;transform:scaleX(1.0212);-webkit-text-stroke:0.7px currentColor;">Subtotal</div><div class="t" style="left:1726.04px;top:1049.00px;font-size:23px;font-weight:400;color:#5c6676;z-index:6;transform:scaleX(0.9880);-webkit-text-stroke:0.7px currentColor;">£53,479.30</div><div class="t" style="left:1550.28px;top:1185.00px;font-size:23px;font-weight:700;color:#1c232d;z-index:6;transform:scaleX(0.9312);">Subtotal</div><div class="t" style="left:1726.04px;top:1185.00px;font-size:23px;font-weight:400;color:#1c232d;z-index:6;transform:scaleX(0.9880);">£54,999.30</div><div class="t" style="left:1602.40px;top:1230.00px;font-size:23px;font-weight:400;color:#1c232d;z-index:6;transform:scaleX(0.9058);">Tax</div><div class="t" style="left:1726.04px;top:1230.00px;font-size:23px;font-weight:400;color:#1c232d;z-index:6;transform:scaleX(0.9909);">£10,999.86</div><div class="t" style="left:1585.69px;top:1274.00px;font-size:23px;font-weight:700;color:#1c232d;z-index:6;transform:scaleX(0.9429);">Total</div><div class="t" style="left:1726.37px;top:1274.00px;font-size:23px;font-weight:700;color:#1c232d;z-index:6;transform:scaleX(0.9851);">£65,999.16</div><div class="t" style="left:2058.67px;top:529.00px;font-size:23px;font-weight:700;color:#1c232d;z-index:6;transform:scaleX(0.9161);">Payment status</div><div class="t" style="left:2087.54px;top:584.00px;font-size:26px;font-weight:400;color:#1b222d;z-index:6;transform:scaleX(0.9790);">PAID</div><div class="t" style="left:2035.69px;top:735.00px;font-size:23px;font-weight:700;color:#1c232d;z-index:6;transform:scaleX(0.9053);">Invoice status</div><div class="t" style="left:2498.15px;top:742.00px;font-size:23px;font-weight:400;color:#2f3742;z-index:6;transform:scaleX(0.9478);">Sent</div><div class="t" style="left:2036.61px;top:795.00px;font-size:23px;font-weight:700;color:#1c232d;z-index:6;transform:scaleX(0.8901);">Schedule</div><div class="t" style="left:2279.41px;top:795.00px;font-size:23px;font-weight:400;color:#1c232d;z-index:6;transform:scaleX(0.9867);">018a279f-eeae-79b3-86e5-</div><div class="t" style="left:2412.90px;top:821.00px;font-size:23px;font-weight:400;color:#1c232d;z-index:6;transform:scaleX(0.9962);">c8dc9c29f003</div><div class="t" style="left:2035.62px;top:878.00px;font-size:23px;font-weight:700;color:#1c232d;z-index:6;transform:scaleX(0.9463);">Plan</div><div class="t" style="left:2333.02px;top:878.00px;font-size:23px;font-weight:400;color:#1c232d;z-index:6;transform:scaleX(0.9563);">Custom Pricing Finstar</div><div class="t" style="left:2036.29px;top:942.00px;font-size:23px;font-weight:700;color:#1c232d;z-index:6;transform:scaleX(0.9142);">Customer</div><div class="t" style="left:2485.41px;top:942.00px;font-size:23px;font-weight:400;color:#1c232d;z-index:6;transform:scaleX(0.9971);">Finstar</div><div class="t" style="left:2036.30px;top:1006.00px;font-size:23px;font-weight:700;color:#1c232d;z-index:6;transform:scaleX(0.9049);">Customer emails</div><div class="t" style="left:2297.60px;top:1006.00px;font-size:23px;font-weight:400;color:#1c232d;z-index:6;transform:scaleX(0.9588);">invoices@finstar-tech.com</div><div class="t" style="left:2035.68px;top:1064.00px;font-size:23px;font-weight:700;color:#1c232d;z-index:6;transform:scaleX(0.9132);">Billing period</div><div class="t" style="left:2389.80px;top:1064.00px;font-size:23px;font-weight:400;color:#1c232d;z-index:6;transform:scaleX(0.8973);">1 Sep - 30 Sep 23</div><div class="t" style="left:2035.65px;top:1122.00px;font-size:23px;font-weight:700;color:#1c232d;z-index:6;transform:scaleX(0.9298);">Invoice total</div><div class="t" style="left:2442.74px;top:1122.00px;font-size:23px;font-weight:400;color:#1c232d;z-index:6;transform:scaleX(0.9865);">£65,999.16</div><div class="t" style="left:2036.26px;top:1179.00px;font-size:23px;font-weight:700;color:#1c232d;z-index:6;transform:scaleX(0.9386);">Creation date</div><div class="t" style="left:2399.66px;top:1179.00px;font-size:23px;font-weight:400;color:#1c232d;z-index:6;transform:scaleX(0.9865);">1 October 2023</div><div class="t" style="left:2035.66px;top:1236.00px;font-size:23px;font-weight:700;color:#1c232d;z-index:6;transform:scaleX(0.9238);">Invoice date</div><div class="t" style="left:2399.66px;top:1236.00px;font-size:23px;font-weight:400;color:#1c232d;z-index:6;transform:scaleX(0.9865);">1 October 2023</div><div class="t" style="left:2036.59px;top:1294.00px;font-size:23px;font-weight:700;color:#1c232d;z-index:6;transform:scaleX(0.9137);">Sent date</div><div class="t" style="left:2399.61px;top:1294.00px;font-size:23px;font-weight:400;color:#1c232d;z-index:6;transform:scaleX(0.9868);">2 October 2023</div><div class="t" style="left:2176.69px;top:1418.00px;font-size:23px;font-weight:700;color:#1f2630;z-index:6;transform:scaleX(0.9261);">View in customer portal</div><div class="t" style="left:960.06px;top:641.00px;font-size:23px;font-weight:700;color:#353d49;z-index:12;transform:scaleX(0.9265);">Pricing information</div><div class="t" style="left:960.01px;top:705.00px;font-size:23px;font-weight:400;color:#7b8692;z-index:12;transform:scaleX(0.9564);">Usage metric</div><div class="t" style="left:959.59px;top:749.00px;font-size:23px;font-weight:400;color:#7b8692;z-index:12;transform:scaleX(1.0065);">Product</div><div class="t" style="left:960.98px;top:794.00px;font-size:23px;font-weight:400;color:#7b8692;z-index:12;transform:scaleX(0.9331);">Type</div><div class="t" style="left:959.67px;top:839.00px;font-size:23px;font-weight:400;color:#7b8692;z-index:12;transform:scaleX(0.9649);">Frequency</div><div class="t" style="left:959.61px;top:883.00px;font-size:23px;font-weight:400;color:#7b8692;z-index:12;transform:scaleX(0.9969);">Billing type</div><div class="t" style="left:1211.43px;top:705.00px;font-size:23px;font-weight:400;color:#4a6cc2;z-index:12;transform:scaleX(0.9501);">Card payments</div><div class="t" style="left:1199.74px;top:749.00px;font-size:23px;font-weight:400;color:#1f2733;z-index:12;transform:scaleX(0.9429);">Card Payments</div><div class="t" style="left:1200.02px;top:794.00px;font-size:23px;font-weight:400;color:#1f2733;z-index:12;transform:scaleX(0.9781);">Graduated</div><div class="t" style="left:1198.90px;top:839.00px;font-size:23px;font-weight:400;color:#1f2733;z-index:12;transform:scaleX(1.0494);">Monthly</div><div class="t" style="left:1198.98px;top:883.00px;font-size:23px;font-weight:400;color:#1f2733;z-index:12;transform:scaleX(1.0076);">In Arrears</div><div class="t" style="left:961.09px;top:941.00px;font-size:23px;font-weight:700;color:#353d49;z-index:12;transform:scaleX(0.9225);">Tiers</div><div class="t" style="left:959.45px;top:999.00px;font-size:23px;font-weight:400;color:#7b8692;z-index:12;transform:scaleX(0.9752);">From 1 to 1000</div><div class="t" style="left:959.43px;top:1043.00px;font-size:23px;font-weight:400;color:#7b8692;z-index:12;transform:scaleX(0.9836);">From 1001 to 2500</div><div class="t" style="left:959.46px;top:1089.00px;font-size:23px;font-weight:400;color:#7b8692;z-index:12;transform:scaleX(0.9677);">From 2501 to ∞</div><div class="t" style="left:1200.74px;top:999.00px;font-size:23px;font-weight:400;color:#1f2733;z-index:12;transform:scaleX(0.9839);">£0.50</div><div class="t" style="left:1200.75px;top:1043.00px;font-size:23px;font-weight:400;color:#1f2733;z-index:12;transform:scaleX(0.9732);">£0.75</div><div class="t" style="left:1200.74px;top:1089.00px;font-size:23px;font-weight:400;color:#1f2733;z-index:12;transform:scaleX(0.9839);">£0.00</div>
<svg width="2858" height="1608" style="position:absolute;left:0;top:0;z-index:20" fill="none" stroke-linecap="round" stroke-linejoin="round">
<g stroke="#6d7580" stroke-width="2.4">
<rect x="426.5" y="204" width="37" height="29" rx="5"/>
<line x1="439" y1="204" x2="439" y2="233"/>
<g stroke-width="1.6"><line x1="430.5" y1="210.3" x2="435" y2="210.3"/><line x1="430.5" y1="214.6" x2="435" y2="214.6"/><line x1="430.5" y1="219" x2="435" y2="219"/></g>
<polyline points="536.5,204.5 521,218 536.5,231.5" stroke-width="2.8"/>
<polyline points="587,204.5 602.5,218 587,231.5" stroke="#b6bbc1" stroke-width="2.8"/>
<circle cx="2300.7" cy="218" r="15.6" stroke-width="2.3"/>
<line x1="2300.7" y1="209.5" x2="2300.7" y2="226"/>
<polyline points="2294.5,220.5 2300.7,226.5 2306.9,220.5"/>
<path d="M2375.5,209.5 H2371.5 a3,3 0 0 0 -3,3 V232 a3,3 0 0 0 3,3 H2393.5 a3,3 0 0 0 3,-3 V212.5 a3,3 0 0 0 -3,-3 H2389.5"/>
<line x1="2382.5" y1="199.5" x2="2382.5" y2="221.5"/>
<polyline points="2376.5,205 2382.5,199 2388.5,205"/>
<line x1="2451.5" y1="218" x2="2478.5" y2="218"/>
<line x1="2465" y1="204.5" x2="2465" y2="231.5"/>
<path d="M2539,226.5 H2533 a3.5,3.5 0 0 1 -3.5,-3.5 V205 a3.5,3.5 0 0 1 3.5,-3.5 H2551.5 a3.5,3.5 0 0 1 3.5,3.5 V210.5"/>
<rect x="2539.5" y="210.5" width="24.5" height="24" rx="3.5"/>
<path d="M1876,219.5 A9.7,9.7 0 1 1 1866.3,210.8 L1870,211.2" stroke-width="2.1"/>
<polyline points="1865.6,205.8 1871,211.2 1865.6,216.6" stroke-width="2.1"/>
</g>
<rect x="1230.4" y="216.3" width="15.4" height="13" rx="2" fill="#939aa4"/>
<path d="M1233.9,217 V211.6 a4.2,4.2 0 0 1 8.4,0 V217" stroke="#939aa4" stroke-width="1.9"/>
<g stroke="#1b2129" stroke-width="2.8"><line x1="2526" y1="310.5" x2="2548" y2="332"/><line x1="2548" y1="310.5" x2="2526" y2="332"/></g>
<g stroke="#39414d" stroke-width="1.8">
<circle cx="279" cy="424" r="12.3"/><line x1="274" y1="424" x2="284" y2="424"/><line x1="279" y1="419" x2="279" y2="429"/>
<path d="M265.5,534.3 L279,521.5 L292.5,534.3 M269,532.5 V544 a2.5,2.5 0 0 0 2.5,2.5 H286.7 a2.5,2.5 0 0 0 2.5,-2.5 V532.5 M276.3,546.3 V540.5 a2,2 0 0 1 2,-2 h1.6 a2,2 0 0 1 2,2 V546.3"/>
<g stroke="#1a2029" stroke-width="2.3"><rect x="266" y="588.2" width="26" height="16.8" rx="2.5"/><circle cx="279" cy="596.5" r="4.1"/><path d="M266,607.6 L277.5,608 L287.5,610.5 Q289.5,611 289.5,608"/></g>
<circle cx="271.3" cy="596.5" r="1.2" fill="#1a2029" stroke="none"/><circle cx="286.7" cy="596.5" r="1.2" fill="#1a2029" stroke="none"/>
<path d="M279.1,815.3 L291.3,822 V834.2 L279.1,841 L266.8,834.2 V822 Z M266.8,822 L279.1,829 L291.3,822 M279.1,829 V841"/>
<path d="M279.1,879 L292.5,886.2 L279.1,893.2 L265.7,886.2 Z M268.5,890.5 L265.7,892 L279.1,899.2 L292.5,892 L289.7,890.5 M268.5,896.5 L265.7,898 L279.1,905.2 L292.5,898 L289.7,896.5"/>
<path d="M265.5,968 H292.5 M267.8,968 V944.3 H282.5 V968 M282.5,950 H291 V968 M266,944.3 H284.3 M281.5,950 H292.2 M272.2,968 V964.5 a3,3 0 0 1 6,0 V968"/>
<g fill="#39414d" stroke="none"><circle cx="272.6" cy="949" r="0.9"/><circle cx="277.6" cy="949" r="0.9"/><circle cx="272.6" cy="953" r="0.9"/><circle cx="277.6" cy="953" r="0.9"/><circle cx="272.6" cy="957" r="0.9"/><circle cx="277.6" cy="957" r="0.9"/><circle cx="286.6" cy="955" r="0.8"/><circle cx="286.6" cy="959" r="0.8"/><circle cx="286.6" cy="963" r="0.8"/></g>
<polyline points="265.8,1027.8 275.1,1018.6 280.8,1024.8 292.3,1015.6"/>
<polyline points="284.2,1012.8 292.3,1015.6 289.3,1023.6"/>
<path d="M273.4,1091.6 C273.4,1088.2 268.6,1086.2 268.6,1079.4 A10.5,10.5 0 1 1 289.6,1079.4 C289.6,1086.2 284.8,1088.2 284.8,1091.6 M276.2,1084.9 H282 M279.1,1084.9 V1092 M274.4,1095 H283.8 M275.8,1098.2 H282.4"/>
<path d="M271,1139.8 H276.8 a3.4,3.4 0 1 1 6.6,0 H291.3 V1147.3 a3.2,3.2 0 1 0 0,6.3 V1158.6 H283.4 a3.3,3.3 0 1 0 -6.5,0 H270.7 V1153.2 a3.3,3.3 0 1 1 0,-6.4 Z"/>
<polyline points="480,594.8 487,601.6 494,594.8" stroke="#262d38" stroke-width="2.3"/>
<polyline points="480,1016.3 487,1023.1 494,1016.3" stroke="#262d38" stroke-width="2.3"/>
<path d="M664.8,312.8 a2.2,2.2 0 0 1 2.2,-2.2 h8.4 l6,6 v12.2 a2.2,2.2 0 0 1 -2.2,2.2 h-12.2 a2.2,2.2 0 0 1 -2.2,-2.2 z M675.3,310.8 v4 a1.6,1.6 0 0 0 1.6,1.6 h4.2 M668.6,318.2 h3 M668.6,322 h8.4 M668.6,325.8 h8.4" stroke="#353d49" stroke-width="2.1"/>
<path d="M2139,802.3 L2150.3,809.3 L2139,816.3 Z" stroke="#353d49" stroke-width="1.9"/>
<g stroke="#353d49" stroke-width="1.8"><rect x="2303.2" y="884.6" width="6.8" height="6.8" rx="1.4"/><rect x="2312.3" y="884.6" width="6.8" height="6.8" rx="1.4"/><rect x="2303.2" y="893.6" width="6.8" height="6.8" rx="1.4"/><rect x="2312.3" y="893.6" width="6.8" height="6.8" rx="1.4"/></g>
<g stroke="#353d49" stroke-width="1.8"><circle cx="2461.9" cy="952.4" r="3.2"/><path d="M2456,963.3 V961.6 a3.4,3.4 0 0 1 3.4,-3.4 h5 a3.4,3.4 0 0 1 3.4,3.4 V963.3 M2467.6,949.2 a3.2,3.2 0 0 1 0,6.4 M2470.2,958.4 a3.3,3.3 0 0 1 2.6,3.2 V963.3"/></g>
<polyline points="2493.5,592.5 2501,600.5 2508.5,592.5" stroke="#1f262f" stroke-width="2.5"/>
<path d="M268.5,1606.5 L271,1604 H274.8 L275.8,1601.3 a1.5,1.5 0 0 1 1.4,-1 h4.6 a1.5,1.5 0 0 1 1.4,1 L284.2,1604 H287.5 L290,1606.5" stroke="#39414d" stroke-width="1.8"/>
</g>
<g fill="#ffffff" stroke="none"><rect x="1392" y="716.5" width="2.5" height="6.5" rx="1.2"/><rect x="1396.6" y="713.2" width="2.5" height="9.8" rx="1.2"/><rect x="1401" y="710.4" width="2.5" height="12.6" rx="1.2"/><rect x="1405.5" y="706.9" width="2.5" height="16.1" rx="1.2"/></g>
<g transform="translate(873.8,560.5) scale(1.08,1)">
<path d="M6,4 C6,1.2 9.6,1.2 9.6,4 L9.6,10.5 C10.2,8.6 13.2,8.6 13.4,10.8 C14,9.2 16.8,9.4 17,11.6 C17.6,10.2 20.6,10.6 20.6,13 L20.6,18.5 C20.6,21.5 19.5,23 18.5,25.8 L9.5,25.8 C7.5,23.2 3.6,18.6 1.4,16 C0.2,14.4 2,12.2 3.8,13.6 L6,15.6 Z" fill="#fff" stroke="#000" stroke-width="1.4" stroke-linejoin="round"/>
<path d="M12.4,17 V22 M15.2,17 V22 M18,17 V22" stroke="#000" stroke-width="1.2"/>
</g>
</svg>
</body></html>
